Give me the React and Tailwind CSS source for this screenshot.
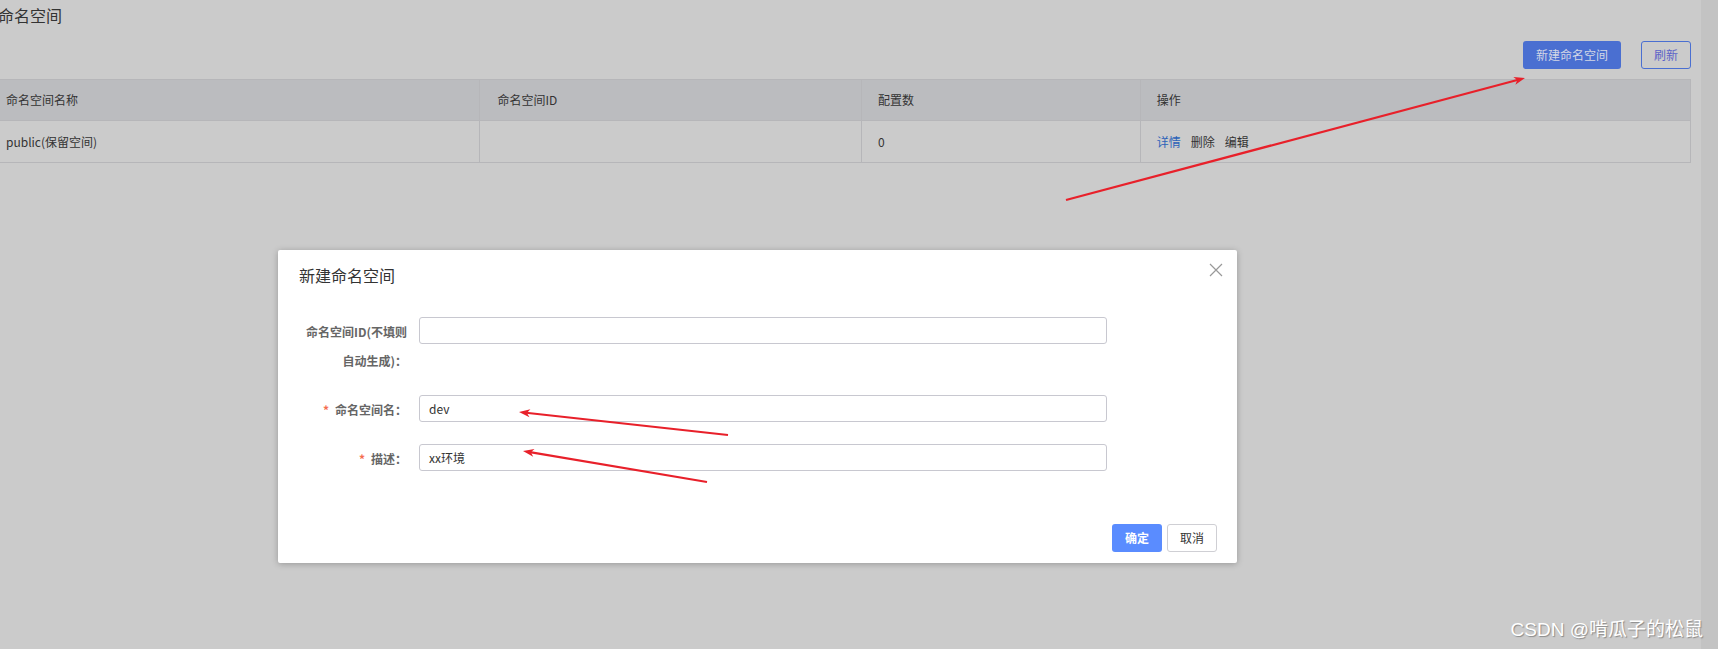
import React from "react";

const columns = [
  { key: "name", title: "命名空间名称", width: "w-[492px]", pad: "pl-[17px]" },
  { key: "id", title: "命名空间ID", width: "w-[382px]", pad: "pl-[17px]" },
  { key: "count", title: "配置数", width: "w-[279px]", pad: "pl-[16px]" },
  { key: "ops", title: "操作", width: "w-[550px]", pad: "pl-[16px]" },
];

const rows = [{ name: "public(保留空间)", id: "", count: "0" }];

const arrows = [
  { x1: 1066, y1: 200, x2: 1525, y2: 78 },
  { x1: 728, y1: 435, x2: 519, y2: 412 },
  { x1: 707, y1: 482, x2: 523, y2: 451 },
];

// arrow head as a triangle computed from the line direction
const arrowHead = (a, len = 11, w = 4) => {
  const dx = a.x2 - a.x1;
  const dy = a.y2 - a.y1;
  const d = Math.hypot(dx, dy);
  const ux = dx / d;
  const uy = dy / d;
  const bx = a.x2 - ux * len;
  const by = a.y2 - uy * len;
  return {
    points: `${a.x2},${a.y2} ${bx - uy * w},${by + ux * w} ${bx + ux * 3},${by + uy * 3} ${bx + uy * w},${by - ux * w}`,
    end: { x: bx + ux * 4, y: by + uy * 4 },
  };
};

const FormRow = ({ label, required, value, twoLine }) => (
  <div className="flex items-start">
    <label
      className={`w-[109px] shrink-0 text-right text-[12px] font-bold text-[#666] leading-[29px] ${
        twoLine ? "" : ""
      }`}
    >
      {required && <span className="text-[#f56c50] mr-[6px]">*</span>}
      {label}
    </label>
    <div className="ml-[12px] w-[688px] h-[27px] border border-[#c8c8d0] rounded-[3px] bg-white flex items-center px-[9px] text-[12px] text-[#333]">
      {value}
    </div>
  </div>
);

const App = () => {
  return (
    <div
      className="relative w-[1718px] h-[649px] overflow-hidden bg-[#cbcbcb] flex"
      style={{ fontFamily: '"Noto Sans CJK SC", "Noto Sans", sans-serif' }}
    >
      <div className="w-[1701px] shrink-0">
        <div className="-ml-[12px] w-[1703px]">
          <h1 className="ml-[10px] pt-[3px] text-[16px] leading-[24px] text-[#333] font-normal">
            命名空间
          </h1>

          <div className="mt-[14px] flex justify-end gap-[20px]">
            <button className="w-[98px] h-[28px] rounded-[3px] bg-[#4a6fd1] text-[12px] text-[#d3d7e6]">
              新建命名空间
            </button>
            <button className="w-[50px] h-[28px] rounded-[3px] border border-[#4a6fd1] text-[12px] text-[#5b63c8]">
              刷新
            </button>
          </div>

          <div className="mt-[10px] border border-[#b6b6b9] text-[12px] text-[#333]">
            <div className="flex h-[41px] bg-[#bbbcbf] border-b border-[#b6b6b9]">
              {columns.map((c, i) => (
                <div
                  key={c.key}
                  className={`${c.width} ${c.pad} flex items-center ${
                    i < columns.length - 1 ? "border-r border-[#b6b6b9]" : ""
                  }`}
                >
                  {c.title}
                </div>
              ))}
            </div>
            {rows.map((r) => (
              <div key={r.name} className="flex h-[41px] bg-[#cbcbcb]">
                <div className="w-[492px] pl-[17px] flex items-center border-r border-[#b6b6b9]">
                  {r.name}
                </div>
                <div className="w-[382px] pl-[17px] flex items-center border-r border-[#b6b6b9]">
                  {r.id}
                </div>
                <div className="w-[279px] pl-[16px] flex items-center border-r border-[#b6b6b9]">
                  {r.count}
                </div>
                <div className="w-[550px] pl-[16px] flex items-center gap-[10px]">
                  <a className="text-[#2b62b9]">详情</a>
                  <a>删除</a>
                  <a>编辑</a>
                </div>
              </div>
            ))}
          </div>
        </div>
      </div>
      <div className="flex-1 bg-[#c3c3c3]" />

      {/* dialog */}
      <div className="absolute left-[278px] top-[250px] w-[959px] h-[313px] bg-white rounded-[2px] shadow-[0_1px_6px_rgba(0,0,0,0.25)]">
        <div className="flex items-center justify-between pl-[21px] pr-[14px] pt-[14px]">
          <h2 className="text-[16px] leading-[22px] text-[#333] font-normal">新建命名空间</h2>
          <svg width="14" height="14" viewBox="0 0 14 14" className="mt-[-10px]">
            <path d="M1 1 L13 13 M13 1 L1 13" stroke="#999" strokeWidth="1.2" fill="none" />
          </svg>
        </div>

        <div className="mt-[31px] pl-[20px] flex flex-col gap-[20px]">
          <div className="flex items-start">
            <label className="w-[109px] shrink-0 text-right text-[12px] font-bold text-[#666] leading-[29px]">
              命名空间ID(不填则自动生成)：
            </label>
            <div className="ml-[12px] w-[688px] h-[27px] border border-[#c8c8d0] rounded-[3px] bg-white" />
          </div>
          <FormRow label="命名空间名：" required value="dev" />
          <FormRow label="描述：" required value="xx环境" />
        </div>

        <div className="absolute right-[20px] bottom-[11px] flex gap-[5px]">
          <button className="w-[50px] h-[28px] rounded-[3px] bg-[#5a8cff] text-white text-[12px] font-bold">
            确定
          </button>
          <button className="w-[50px] h-[28px] rounded-[3px] border border-[#cfcfd4] bg-white text-[#333] text-[12px]">
            取消
          </button>
        </div>
      </div>

      {/* red annotation arrows */}
      <svg className="absolute inset-0 pointer-events-none" width="1718" height="649">
        {arrows.map((a, i) => {
          const h = arrowHead(a);
          return (
            <g key={i}>
              <line x1={a.x1} y1={a.y1} x2={h.end.x} y2={h.end.y} stroke="#e8202a" strokeWidth="2.2" />
              <polygon points={h.points} fill="#e8202a" />
            </g>
          );
        })}
      </svg>

      <div
        className="absolute right-[15px] bottom-[7px] text-[19px] leading-[24px] text-white [text-shadow:1px_1px_1px_#8a8a8a]"
        style={{ fontFamily: '"Liberation Sans", "Noto Sans CJK SC", sans-serif' }}
      >
        CSDN @啃瓜子的松鼠
      </div>
    </div>
  );
};

export default App;
